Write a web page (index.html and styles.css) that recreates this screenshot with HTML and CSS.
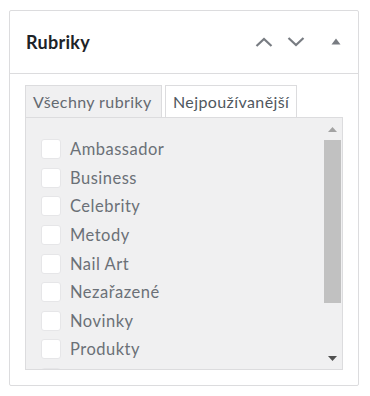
FILE: index.html
```html
<!DOCTYPE html>
<html lang="cs">
<head>
  <meta charset="UTF-8" />
  <meta name="viewport" content="width=device-width, initial-scale=1" />
  <title>Rubriky</title>
  <link rel="stylesheet" href="styles.css">
</head>
<body>
  <div class="postbox">
    <div class="postbox-header">
      <h2 class="postbox-title">Rubriky</h2>
      <div class="postbox-actions">
        <button class="handle-btn" aria-label="Posunout nahoru">
          <svg width="18" height="10" viewBox="0 0 18 10"><path d="M1.5 9 L9 2 L16.5 9" fill="none" stroke="#787c82" stroke-width="2.2"/></svg>
        </button>
        <button class="handle-btn" aria-label="Posunout dolů">
          <svg width="18" height="10" viewBox="0 0 18 10"><path d="M1.5 1 L9 8 L16.5 1" fill="none" stroke="#787c82" stroke-width="2.2"/></svg>
        </button>
        <button class="toggle-btn" aria-label="Sbalit">
          <svg width="10" height="7" viewBox="0 0 10 7"><path d="M0.5 6.5 L5 0.5 L9.5 6.5 Z" fill="#787c82"/></svg>
        </button>
      </div>
    </div>
    <div class="postbox-inside">
      <ul class="category-tabs">
        <li class="tab active">Všechny rubriky</li>
        <li class="tab">Nejpoužívanější</li>
      </ul>
      <div class="tabs-panel">
        <ul class="category-list">
          <li><label><input type="checkbox"> Ambassador</label></li>
          <li><label><input type="checkbox"> Business</label></li>
          <li><label><input type="checkbox"> Celebrity</label></li>
          <li><label><input type="checkbox"> Metody</label></li>
          <li><label><input type="checkbox"> Nail Art</label></li>
          <li><label><input type="checkbox"> Nezařazené</label></li>
          <li><label><input type="checkbox"> Novinky</label></li>
          <li><label><input type="checkbox"> Produkty</label></li>
          <li><label><input type="checkbox"></label></li>
        </ul>
        <div class="scrollbar">
          <div class="scroll-btn">
            <svg width="9" height="5" viewBox="0 0 9 5"><path d="M0 5 L4.5 0 L9 5 Z" fill="#a3a3a3"/></svg>
          </div>
          <div class="scroll-track">
            <div class="scroll-thumb"></div>
          </div>
          <div class="scroll-btn">
            <svg width="9" height="5" viewBox="0 0 9 5"><path d="M0 0 L4.5 5 L9 0 Z" fill="#505050"/></svg>
          </div>
        </div>
      </div>
    </div>
  </div>
</body>
</html>
```

FILE: styles.css
```css
body, html {
  margin: 0;
  padding: 0;
  background: #ffffff;
  font-family: Lato, "Noto Sans", sans-serif;
  color: #1d2327;
}
.postbox {
  margin: 10px 0 0 9px;
  width: 350px;
  height: 376px;
  box-sizing: border-box;
  border: 1px solid #dcdcde;
  border-radius: 2px;
  background: #ffffff;
}
.postbox-header {
  display: flex;
  align-items: center;
  justify-content: space-between;
  height: 62px;
  padding: 0 10px 0 16px;
  border-bottom: 1px solid #dcdcde;
}
.postbox-title {
  margin: 0;
  font-size: 18px;
  font-weight: 700;
  letter-spacing: 0.3px;
  color: #1d2327;
}
.postbox-actions {
  display: flex;
  align-items: center;
}
.handle-btn, .toggle-btn {
  display: flex;
  align-items: center;
  justify-content: center;
  padding: 0;
  border: none;
  background: none;
  cursor: pointer;
}
.handle-btn {
  width: 32px;
  height: 32px;
}
.toggle-btn {
  width: 24px;
  height: 32px;
  margin-left: 12px;
  padding-bottom: 2px;
}
.postbox-inside {
  padding: 11px 15px 0 15px;
}
.category-tabs {
  display: flex;
  gap: 3px;
  margin: 0;
  padding: 0;
  list-style: none;
}
.tab {
  height: 32px;
  box-sizing: border-box;
  padding: 0 7px;
  border: 1px solid #dcdcde;
  border-bottom: none;
  background: #ffffff;
  color: #50575e;
  font-size: 16px;
  letter-spacing: 0.4px;
  line-height: 31px;
}
.tab.active {
  width: 137px;
  background: #f0f0f1;
  color: #646970;
}
.tabs-panel {
  display: flex;
  width: 318px;
  height: 253px;
  box-sizing: border-box;
  border: 1px solid #dcdcde;
  background: #f0f0f1;
  overflow: hidden;
}
.category-list {
  flex: 1;
  margin: 0;
  padding: 17px 0 0 15px;
  list-style: none;
}
.category-list li {
  height: 28.57px;
  display: flex;
  align-items: center;
}
.category-list label {
  display: flex;
  align-items: center;
  gap: 9px;
  font-size: 16.5px;
  letter-spacing: 0.5px;
  color: #6b7077;
}
.category-list input {
  appearance: none;
  margin: 0;
  width: 20px;
  height: 20px;
  box-sizing: border-box;
  border: 1px solid #e6e6e8;
  border-radius: 3px;
  background: #ffffff;
}
.scrollbar {
  display: flex;
  flex-direction: column;
  width: 17px;
  margin-right: 1px;
}
.scroll-btn {
  display: flex;
  align-items: center;
  justify-content: center;
  height: 22px;
}
.scroll-track {
  flex: 1;
}
.scroll-thumb {
  height: 163px;
  background: #c1c1c1;
}
```
